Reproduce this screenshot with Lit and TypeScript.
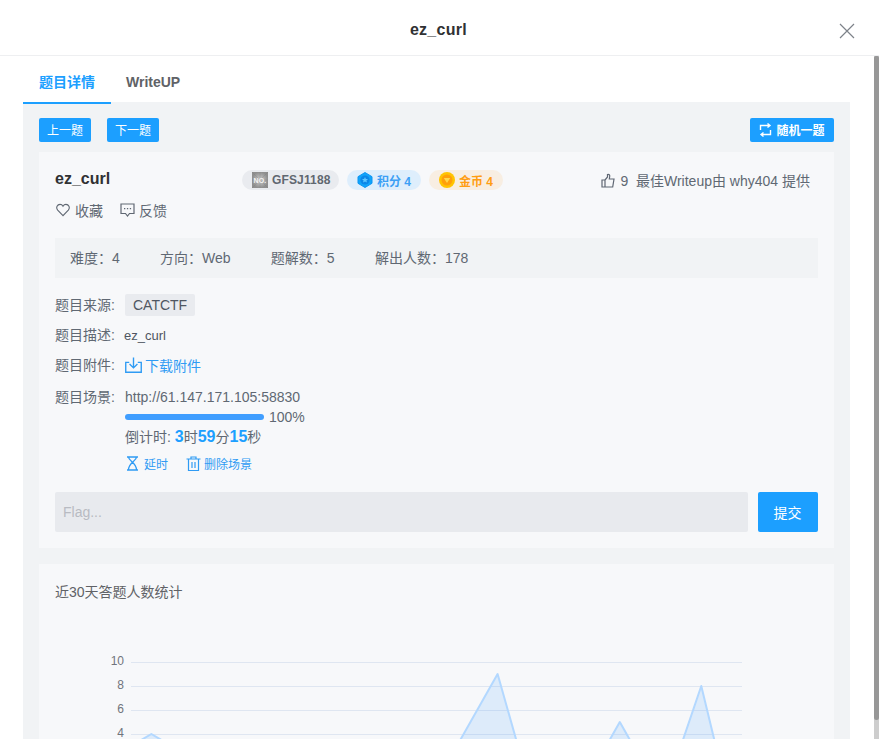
import { LitElement, html, css, svg } from "lit";
import { customElement } from "lit/decorators.js";

const W = 611 / 30;
const X0 = 131;
const yOf = (v: number) => 782 - v * 12;
const VALUES: [number, number][] = [
  [0, 3], [1, 4], [2, 3], [16, 3], [17, 6], [18, 9], [19, 3],
  [23, 2], [24, 5], [25, 2], [27, 3], [28, 8], [29, 1],
];
const CHART_Y = 640;

@customElement("app-root")
export class AppRoot extends LitElement {
  static styles = css`
    :host { display: block; width: 879px; height: 739px; overflow: hidden; background: #fff;
      font-family: "Liberation Sans", "Noto Sans CJK SC", sans-serif; font-size: 14px; color: #606266; }
    * { box-sizing: border-box; }
    svg { display: block; flex: none; }
    .head { height: 56px; border-bottom: 1px solid #eeeff1; display: flex; align-items: center; justify-content: center; position: relative; }
    .head h1 { margin: 5px 2px 0 0; font-size: 16px; font-weight: 700; color: #303133; letter-spacing: .3px; }
    .close { position: absolute; right: 24px; top: 23px; }
    .scroll { display: flex; height: 683px; overflow: hidden; }
    .main { width: 874px; padding: 0 24px 0 23px; overflow: hidden; }
    .bar { width: 5px; flex: none; background: #cdcdcd; }
    .thumb { height: 664px; background: #979797; border-radius: 2px 2px 3px 3px; }
    .tabs { display: flex; height: 46px; font-size: 14px; font-weight: 700; }
    .tab { height: 48px; padding-top: 17px; line-height: 18px; position: relative; }
    .tab.on { width: 88px; padding-left: 16px; color: #1c9fff; border-bottom: 2px solid #1c9fff; z-index: 1; }
    .tab.off { padding-left: 15px; color: #606266; }
    .pane { background: #f1f3f5; padding: 16px 16px 0; height: 660px; }
    .top { display: flex; gap: 16px; height: 24px; }
    .btn { height: 24px; padding-bottom: 2px; background: #1c9fff; color: #fff; border-radius: 2px; font-size: 12px; display: flex; align-items: center; justify-content: center; gap: 4px; }
    .w52 { width: 52px; }
    .rand { width: 84px; margin-left: auto; font-weight: 700; }
    .rand svg { margin-top: 2px; }
    .card { background: #f7f8fa; margin-top: 10px; padding: 16px; height: 396px; }
    .row1 { display: flex; align-items: center; height: 24px; }
    .name { width: 187px; padding-bottom: 2px; font-size: 16px; font-weight: 700; color: #303133; }
    .pills { display: flex; gap: 8px; }
    .pill { height: 20px; border-radius: 10px; display: flex; align-items: center; gap: 4px; padding: 0 0 0 10px; font-size: 12px; font-weight: 700; }
    .p1 { background: #e9ebef; color: #606770; width: 97px; letter-spacing: .15px; }
    .p2 { background: #deeefc; color: #3c9ff5; width: 74px; }
    .p3 { background: #f8eee2; color: #ff9d12; width: 74px; }
    .best { margin-left: auto; margin-right: 8px; display: flex; align-items: center; font-size: 14px; color: #606873; white-space: pre; }
    .best svg { margin-right: 5px; }
    .acts { display: flex; gap: 17px; margin-top: 8px; height: 20px; align-items: center; color: #606873; font-size: 14px; }
    .act { display: flex; align-items: center; gap: 4px; }
    .act.first { margin-left: 1px; gap: 5px; }
    .stats { display: flex; height: 40px; padding: 0 0 2px 15px; align-items: center; margin-top: 18px; gap: 40.25px; background: #f1f3f5; font-size: 14px; color: #606873; }
    .line { display: flex; margin-top: 9px; height: 20px; align-items: center; color: #606873; }
    .line.src { margin-top: 16px; height: 22px; }
    .line.att { margin-top: 10px; }
    .lab { width: 70px; flex: none; padding-bottom: 2px; }
    .tag { background: #e9ebef; height: 22px; padding: 0 8px; border-radius: 2px; display: flex; align-items: center; color: #4f5661; font-size: 14px; }
    .desc { color: #4f5661; font-size: 13px; margin-left: -1px; }
    .link { display: flex; align-items: center; gap: 3px; color: #2f9bf4; padding-bottom: 1px; }
    .scene { display: flex; align-items: flex-start; margin-top: 12px; color: #606873; }
    .scene .lab { line-height: 20px; padding-bottom: 0; }
    .url { line-height: 20px; }
    .prog { display: flex; align-items: center; gap: 5px; height: 20px; }
    .track { width: 139px; height: 6px; border-radius: 3px; background: #409eff; }
    .timer { height: 20px; display: flex; align-items: baseline; line-height: 20px; white-space: pre; }
    .timer b { color: #1c9fff; font-size: 16px; }
    .ops { display: flex; gap: 18px; margin-top: 6px; height: 20px; font-size: 12px; color: #2f9bf4; }
    .op { display: flex; align-items: center; gap: 3px; }
    .op.wait { gap: 4px; }
    .flag { display: flex; gap: 10px; margin-top: 19px; }
    .input { width: 693px; height: 40px; background: #e8eaee; border-radius: 2px; display: flex; align-items: center; padding-left: 8px; color: #b8bbc2; }
    .submit { width: 60px; height: 40px; padding-right: 1px; background: #1c9fff; color: #fff; border-radius: 2px; display: flex; align-items: center; justify-content: center; font-size: 14px; }
    .chart { background: #f7f8fa; margin-top: 16px; height: 300px; padding: 20px 16px 0; }
    .chart h3 { margin: 0; font-size: 14px; font-weight: 400; line-height: 16px; color: #606266; }
    .plot { display: block; margin: 40px 0 0 -16px; }
    .plot text { font-family: "Liberation Sans", sans-serif; font-size: 12px; fill: #70747c; }
  `;

  private chart() {
    // Chart canvas: its origin is at page (39, 640).
    const ox = 39;
    const xs = (i: number) => X0 + i * W - ox;
    const ys = (v: number) => yOf(v) - CHART_Y;
    const groups: [number, number][][] = [VALUES.slice(0, 3), VALUES.slice(3, 7), VALUES.slice(7, 10), VALUES.slice(10, 13)];
    return html`<svg class="plot" width="795" height="160" viewBox="0 0 795 160">
      ${[10, 8, 6, 4].map((v) => svg`
        <line x1="${X0 - ox}" x2="${742 - ox}" y1="${ys(v) + .5}" y2="${ys(v) + .5}" stroke="#dfe6f1" stroke-width="1"/>
        <text x="${124 - ox}" y="${ys(v) + 3}" text-anchor="end">${v}</text>`)}
      ${groups.map((g) => {
        const pts = g.map(([i, v]) => `${xs(i)},${ys(v)}`).join(" ");
        const first = xs(g[0][0]);
        const last = xs(g[g.length - 1][0]);
        return svg`<polygon points="${first},${ys(0)} ${pts} ${last},${ys(0)}" fill="#409eff" fill-opacity=".14"/>
        <polyline points="${pts}" fill="none" stroke="#b3d8ff" stroke-width="2" stroke-linejoin="round"/>`;
      })}
    </svg>`;
  }

  render() {
    return html`
      <div class="head"><h1>ez_curl</h1>
        <svg class="close" width="16" height="16" viewBox="0 0 16 16"><path d="M1 1l14 14M15 1L1 15" stroke="#7d8289" stroke-width="1.2" fill="none"/></svg>
      </div>
      <div class="scroll">
        <div class="main">
          <div class="tabs"><div class="tab on">题目详情</div><div class="tab off">WriteUP</div></div>
          <div class="pane">
            <div class="top">
              <div class="btn w52">上一题</div><div class="btn w52">下一题</div>
              <div class="btn rand"><svg width="13" height="14" viewBox="0 0 13 14" fill="none" stroke="#fff" stroke-width="1.4"><path d="M1.500 7V2.500H11M8.500 .5L11 2.500 8.500 4.500M11.500 7v4.500H2M4.500 9.500L2 11.500l2.500 2"/></svg>随机一题</div>
            </div>
            <div class="card">
              <div class="row1">
                <div class="name">ez_curl</div>
                <div class="pills">
                  <div class="pill p1"><svg width="16" height="16" viewBox="0 0 16 16"><defs><radialGradient id="g"><stop offset="0" stop-color="#cfcfcf"/><stop offset="1" stop-color="#8f8f8f"/></radialGradient></defs><rect width="16" height="16" fill="url(#g)"/><path d="M0 0l16 16M16 0L0 16M8 0v16M0 8h16" stroke="#777" stroke-width=".8" opacity=".3"/><text x="8" y="10.500" font-size="7" text-anchor="middle" fill="#f4f4f4" font-family="Liberation Sans">NO.</text></svg>GFSJ1188</div>
                  <div class="pill p2"><svg width="16" height="16" viewBox="0 0 16 16"><path d="M8 .5l7 4.200v6.600l-7 4.200-7-4.200V4.700z" fill="#10a4fa" stroke="#0d94f2" stroke-linejoin="round"/><circle cx="8" cy="8" r="4.600" fill="#0a86e8"/><path d="M8 5l.9 2h2.100L9.400 8.400l.6 2.100L8 9.400 6 10.500l.6-2.100L5 7h2.100z" fill="#5cc6ff"/></svg>积分 4</div>
                  <div class="pill p3"><svg width="16" height="16" viewBox="0 0 16 16"><circle cx="8" cy="8" r="8" fill="#ffc400"/><circle cx="8" cy="8" r="5.500" fill="#ff9f0a"/><path d="M4.800 6h6.400L8 11z" fill="#ffd84a"/></svg>金币 4</div>
                </div>
                <div class="best"><svg width="14" height="15" viewBox="0 0 14 15" fill="none" stroke="#5f6773" stroke-width="1.2"><path d="M1 7h3v7H1zM4 7l2.500-3V1.500c1.500-.5 2.500.5 2.200 2L8.300 6H13l-1.300 8H4"/></svg>9  最佳Writeup由 why404 提供</div>
              </div>
              <div class="acts">
                <div class="act first"><svg width="14" height="14" viewBox="0 0 15 14" fill="none" stroke="#606873" stroke-width="1.200"><path d="M7.500 13L1.800 7.200C-.5 4.500 1.500 1 4.300 1c1.400 0 2.500.7 3.200 1.900C8.200 1.700 9.300 1 10.700 1c2.800 0 4.800 3.500 2.500 6.200z"/></svg>收藏</div>
                <div class="act"><svg width="15" height="14" viewBox="0 0 15 14" fill="none" stroke="#606873" stroke-width="1.200"><path d="M1 1h13v9.500H9.500L7.500 13l-2-2.500H1z"/><path d="M4 5.700h1.300M6.900 5.700h1.300M9.800 5.700h1.300" stroke-width="1.300"/></svg>反馈</div>
              </div>
              <div class="stats"><span>难度：4</span><span>方向：Web</span><span>题解数：5</span><span>解出人数：178</span></div>
              <div class="line src"><div class="lab">题目来源:</div><div class="tag">CATCTF</div></div>
              <div class="line"><div class="lab">题目描述:</div><div class="desc">ez_curl</div></div>
              <div class="line att"><div class="lab">题目附件:</div><div class="link"><svg width="17" height="16" viewBox="0 0 16 15" fill="none" stroke="#2f9bf4" stroke-width="1.300"><path d="M8 .5v9.500M4.300 6.500L8 10.200l3.700-3.700M4 5H.7v9.300h14.600V5H12"/></svg>下载附件</div></div>
              <div class="scene"><div class="lab">题目场景:</div><div>
                <div class="url">http://61.147.171.105:58830</div>
                <div class="prog"><div class="track"></div><span>100%</span></div>
                <div class="timer">倒计时: <b>3</b>时<b>59</b>分<b>15</b>秒</div>
                <div class="ops">
                  <div class="op wait"><svg width="15" height="15" viewBox="0 0 15 15" fill="none" stroke="#2f9bf4" stroke-width="1.300"><path d="M2 1h11M2 14h11M3.500 1c0 4.500 8 5 8 13M11.500 1c0 4.500-8 5-8 13"/></svg>延时</div>
                  <div class="op"><svg width="15" height="15" viewBox="0 0 15 15" fill="none" stroke="#2f9bf4" stroke-width="1.200"><path d="M.5 3h14M5 3V1h5v2M2.500 3v11.500h10V3M6 6v6M9 6v6"/></svg>删除场景</div>
                </div>
              </div></div>
              <div class="flag"><div class="input">Flag...</div><div class="submit">提交</div></div>
            </div>
            <div class="chart"><h3>近30天答题人数统计</h3>${this.chart()}</div>
          </div>
        </div>
        <div class="bar"><div class="thumb"></div></div>
      </div>`;
  }
}
